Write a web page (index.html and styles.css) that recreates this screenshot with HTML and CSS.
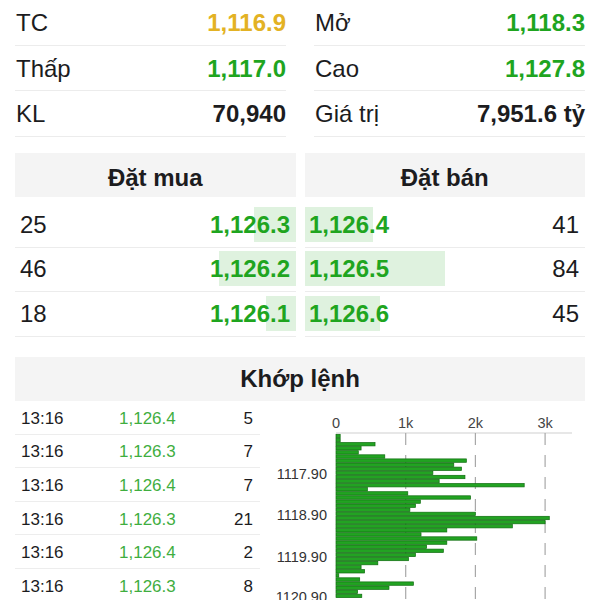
FILE: index.html
```html
<!DOCTYPE html>
<html lang="vi">
<head>
    <meta charset="UTF-8">
    <meta name="viewport" content="width=device-width, initial-scale=1.0">
    <title>Chi tiết chỉ số</title>
    <link rel="stylesheet" href="styles.css">
</head>
<body>
<main class="page">
    <section class="stats">
        <div class="stat"><span>TC</span><span class="value ref">1,116.9</span></div>
        <div class="stat"><span>Mở</span><span class="value up">1,118.3</span></div>
        <div class="stat"><span>Thấp</span><span class="value up">1,117.0</span></div>
        <div class="stat"><span>Cao</span><span class="value up">1,127.8</span></div>
        <div class="stat"><span>KL</span><span class="value">70,940</span></div>
        <div class="stat"><span>Giá trị</span><span class="value">7,951.6 tỷ</span></div>
    </section>

    <section class="book">
        <div class="side bid">
            <div class="book-head">Đặt mua</div>
            <div class="book-row"><span class="depth" style="width:14.9%"></span><span>25</span><span class="price up">1,126.3</span></div>
            <div class="book-row"><span class="depth" style="width:27.4%"></span><span>46</span><span class="price up">1,126.2</span></div>
            <div class="book-row"><span class="depth" style="width:10.7%"></span><span>18</span><span class="price up">1,126.1</span></div>
        </div>
        <div class="side ask">
            <div class="book-head">Đặt bán</div>
            <div class="book-row"><span class="depth" style="width:24.4%"></span><span class="price up">1,126.4</span><span>41</span></div>
            <div class="book-row"><span class="depth" style="width:50%"></span><span class="price up">1,126.5</span><span>84</span></div>
            <div class="book-row"><span class="depth" style="width:26.8%"></span><span class="price up">1,126.6</span><span>45</span></div>
        </div>
    </section>

    <section class="match">
        <div class="match-head">Khớp lệnh</div>
        <div class="match-body">
            <div class="ticks">
                <div class="tick"><span>13:16</span><span class="tick-price">1,126.4</span><span class="qty">5</span></div>
                <div class="tick"><span>13:16</span><span class="tick-price">1,126.3</span><span class="qty">7</span></div>
                <div class="tick"><span>13:16</span><span class="tick-price">1,126.4</span><span class="qty">7</span></div>
                <div class="tick"><span>13:16</span><span class="tick-price">1,126.3</span><span class="qty">21</span></div>
                <div class="tick"><span>13:16</span><span class="tick-price">1,126.4</span><span class="qty">2</span></div>
                <div class="tick"><span>13:16</span><span class="tick-price">1,126.3</span><span class="qty">8</span></div>
            </div>
            <svg class="chart" id="volChart" width="325" height="199" viewBox="0 0 325 199">
                <g class="axis-labels">
                    <text x="76" y="27">0</text>
                    <text x="145.7" y="27">1k</text>
                    <text x="215.4" y="27">2k</text>
                    <text x="285.1" y="27">3k</text>
                </g>
                <line class="axis" x1="76" y1="32" x2="312" y2="32"/>
                <line class="grid" x1="145.7" y1="32" x2="145.7" y2="199"/>
                <line class="grid" x1="215.4" y1="32" x2="215.4" y2="199"/>
                <line class="grid" x1="285.1" y1="32" x2="285.1" y2="199"/>
                <g id="bars"></g>
                <g class="price-labels">
                    <text x="67" y="78">1117.90</text>
                    <text x="67" y="119">1118.90</text>
                    <text x="67" y="160.5">1119.90</text>
                    <text x="67" y="201">1120.90</text>
                </g>
            </svg>
        </div>
    </section>
</main>
<script>
    // Khối lượng theo từng bước giá 0.1, đơn vị nghìn
    const volumes = [0.06, 0.06, 0.56, 0.36, 0.32, 0.70, 1.87, 1.69, 1.80, 1.39,
        1.85, 1.48, 2.70, 0.45, 1.03, 1.93, 1.21, 1.14, 1.06, 2.00,
        3.06, 3.00, 2.53, 1.59, 1.22, 2.02, 1.59, 1.30, 1.54, 1.14,
        1.04, 0.60, 0.36, 0.41, 0.04, 0.34, 1.11, 0.76, 0.31, 0.37];

    const pxPerK = 69.7;
    const bars = document.getElementById("bars");

    volumes.forEach((v, i) => {
        const rect = document.createElementNS("http://www.w3.org/2000/svg", "rect");
        rect.setAttribute("x", 76);
        rect.setAttribute("y", (33.3 + i * 4.1).toFixed(2));
        rect.setAttribute("width", Math.max(v * pxPerK, 1.5).toFixed(2));
        rect.setAttribute("height", 3.4);
        rect.setAttribute("class", "bar");
        bars.appendChild(rect);
    });
</script>
</body>
</html>
```

FILE: styles.css
```css
body {
    margin: 0;
    font-family: "Liberation Sans", Arial, sans-serif;
    color: #1c1c1e;
    background: #fff;
}

.page {
    padding: 0 15px;
}

.up {
    color: #1fa51f;
}

.ref {
    color: #e3b224;
}

/* Thông tin chung */
.stats {
    display: grid;
    grid-template-columns: 1fr 1fr;
    column-gap: 28px;
}

.stat {
    display: flex;
    justify-content: space-between;
    align-items: center;
    box-sizing: border-box;
    height: 45.5px;
    padding: 2px 0 0 1px;
    border-bottom: 1px solid #ececec;
    font-size: 24px;
}

.value {
    font-weight: 700;
}

/* Sổ lệnh */
.book {
    display: grid;
    grid-template-columns: 1fr 1fr;
    column-gap: 9px;
    margin-top: 16.5px;
}

.book-head {
    height: 41px;
    padding-top: 3px;
    margin-bottom: 6px;
    line-height: 44px;
    text-align: center;
    font-size: 24px;
    font-weight: 700;
    background: #f4f4f4;
}

.book-row {
    position: relative;
    display: flex;
    justify-content: space-between;
    align-items: center;
    box-sizing: border-box;
    height: 44.5px;
    border-bottom: 1px solid #ececec;
    font-size: 24px;
}

.book-row span {
    position: relative;
    z-index: 1;
}

.book-row .depth {
    position: absolute;
    top: 3.5px;
    height: 35px;
    z-index: 0;
    background: #dff2df;
}

.bid .book-row {
    padding: 0 5.5px 0 5px;
}

.bid .depth {
    right: 0;
}

.ask .book-row {
    padding: 0 6px 0 4.5px;
}

.ask .depth {
    left: 0;
}

.price {
    font-weight: 700;
}

/* Khớp lệnh */
.match {
    margin-top: 20.5px;
}

.match-head {
    height: 44px;
    line-height: 44px;
    text-align: center;
    font-size: 24px;
    font-weight: 700;
    background: #f4f4f4;
}

.match-body {
    display: flex;
}

.ticks {
    width: 245px;
    flex: none;
}

.tick {
    display: grid;
    grid-template-columns: 98px 1fr auto;
    align-items: center;
    box-sizing: border-box;
    height: 33.6px;
    padding: 3px 7px 0 6px;
    border-bottom: 1px solid #ededed;
    font-size: 17px;
}

.tick-price {
    color: #3fae3f;
}

.chart {
    display: block;
    flex: none;
}

.axis-labels text {
    font-size: 14.5px;
    fill: #444;
    text-anchor: middle;
}

.price-labels text {
    font-size: 14.5px;
    fill: #333;
    text-anchor: end;
}

.axis {
    stroke: #cfcfcf;
    stroke-width: 1;
}

.grid {
    stroke: #a8a8a8;
    stroke-width: 1.2;
    stroke-dasharray: 12 10;
}

.bar {
    fill: #22a322;
    stroke: #0f6c0f;
    stroke-width: 0.7;
}
```
